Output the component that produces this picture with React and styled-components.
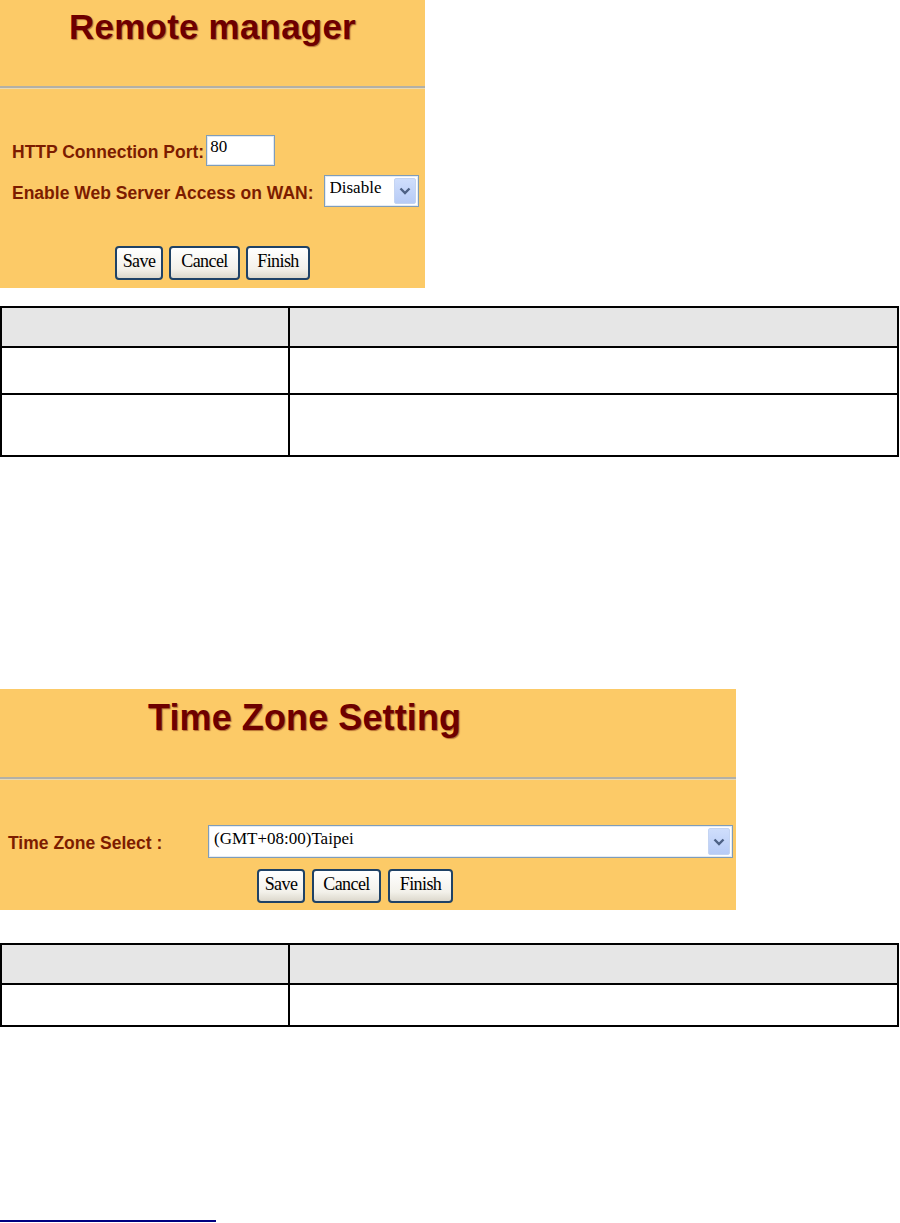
import React from 'react'
import styled, { createGlobalStyle } from 'styled-components'

const GlobalStyle = createGlobalStyle`
    html, body {
        margin: 0;
        padding: 0;
        background: #ffffff;
    }
    body {
        font-family: "Liberation Sans", Arial, sans-serif;
    }
`

const Page = styled.div`
    width: 900px;
    height: 1223px;
    display: flex;
    flex-direction: column;
    align-items: flex-start;
    overflow: hidden;
`

const Panel = styled.div`
    width: ${props => props.width}px;
    height: ${props => props.height}px;
    background-color: #fcca67;
    display: flex;
    flex-direction: column;
    flex-shrink: 0;
    margin-top: ${props => props.top || 0}px;
`

const PanelHead = styled.div`
    height: ${props => props.height}px;
    display: flex;
    justify-content: ${props => props.align || 'center'};
    padding-left: ${props => props.indent || 0}px;
    box-sizing: border-box;
`

const Title = styled.h1`
    margin: ${props => props.top}px 0 0;
    font-family: "Liberation Sans", Arial, sans-serif;
    font-size: ${props => props.size}px;
    line-height: 38px;
    font-weight: bold;
    letter-spacing: ${props => props.spacing}px;
    color: #6e0000;
    text-shadow: 1px 1px 1px rgba(110, 20, 0, 0.5);
`

const Divider = styled.div`
    height: 2px;
    background-color: #b3b0a6;
    border-bottom: 1px solid #e9d9b4;
`

const PanelBody = styled.div`
    flex: 1;
    display: flex;
    flex-direction: column;
    padding: ${props => props.top}px 0 0 ${props => props.left || 0}px;
`

const FieldRow = styled.div`
    display: flex;
    align-items: center;
    gap: ${props => props.gap || 2}px;
    margin-bottom: ${props => props.after || 0}px;
`

const Label = styled.label`
    font-family: "Liberation Sans", Arial, sans-serif;
    font-size: 17.5px;
    font-weight: bold;
    color: #7c1c00;
    width: ${props => props.width ? props.width + 'px' : 'auto'};
    padding-top: 4px;
    flex-shrink: 0;
`

const TextInput = styled.input`
    width: 69px;
    height: 31px;
    box-sizing: border-box;
    border: 1px solid #7f9db9;
    box-shadow: inset 0 0 0 1px #dfe8f3;
    background: #ffffff;
    font-family: "Liberation Serif", "Times New Roman", serif;
    font-size: 17px;
    padding: 0 3px 8px;
    color: #000;
    outline: none;
`

const SelectWrap = styled.div`
    position: relative;
    width: ${props => props.width}px;
    height: ${props => props.height}px;
    box-sizing: border-box;
    border: 1px solid #7f9db9;
    box-shadow: inset 0 0 0 1px #e4ebf4;
    background: #ffffff;
`

const Select = styled.select`
    appearance: none;
    -webkit-appearance: none;
    width: 100%;
    height: 100%;
    border: none;
    background: transparent;
    font-family: "Liberation Serif", "Times New Roman", serif;
    font-size: 17px;
    padding: 0 0 ${props => props.lift || 0}px 5px;
    color: #000;
    outline: none;
`

const DropButton = styled.span`
    position: absolute;
    top: 2px;
    right: 2px;
    bottom: 2px;
    width: 22px;
    border-radius: 2px;
    background: linear-gradient(180deg, #cfdefc 0%, #b7cbf6 100%);
    border: 1px solid #c4d4f2;
    box-sizing: border-box;
    display: flex;
    align-items: center;
    justify-content: center;
    pointer-events: none;
`

const ButtonRow = styled.div`
    display: flex;
    gap: ${props => props.gap || 6}px;
    justify-content: center;
    padding-right: ${props => props.shift || 0}px;
    margin-bottom: ${props => props.after || 0}px;
`

const Button = styled.button`
    width: ${props => props.width}px;
    height: 34px;
    box-sizing: border-box;
    border: 2px solid #1f4266;
    border-radius: 4px;
    background: linear-gradient(180deg, #ffffff 0%, #f3f1ea 70%, #dcd8cc 100%);
    font-family: "Liberation Serif", "Times New Roman", serif;
    font-size: 18px;
    letter-spacing: -0.6px;
    color: #000;
    padding: 0 0 4px;
    cursor: pointer;
`

const Table = styled.table`
    width: 899px;
    border-collapse: collapse;
    margin-top: ${props => props.top}px;
    flex-shrink: 0;
    td, th {
        border: 2px solid #000;
        padding: 0;
    }
`

const HeadCell = styled.th`
    background-color: #e6e6e6;
    height: 38px;
    width: ${props => props.width ? props.width + 'px' : 'auto'};
`

const Cell = styled.td`
    height: ${props => props.height}px;
`

const FootRule = styled.div`
    width: 216px;
    height: 0;
    border-top: 2px solid #000080;
    margin-top: auto;
    margin-bottom: 1px;
`

const Chevron = () => (
    <svg width="12" height="8" viewBox="0 0 12 8">
        <path d="M1.5 1.5 L6 6 L10.5 1.5" fill="none" stroke="#4d6185" strokeWidth="2.4" />
    </svg>
)

const Buttons = ({ gap, shift, after, widths }) => (
    <ButtonRow gap={gap} shift={shift} after={after}>
        <Button width={widths[0]}>Save</Button>
        <Button width={widths[1]}>Cancel</Button>
        <Button width={widths[2]}>Finish</Button>
    </ButtonRow>
)

const InfoTable = ({ top, rows }) => (
    <Table top={top}>
        <thead>
            <tr>
                <HeadCell width={286}></HeadCell>
                <HeadCell></HeadCell>
            </tr>
        </thead>
        <tbody>
            {rows.map((h, i) => (
                <tr key={i}>
                    <Cell height={h}></Cell>
                    <Cell height={h}></Cell>
                </tr>
            ))}
        </tbody>
    </Table>
)

const App = () => {
    return (
        <Page>
            <GlobalStyle />
            <Panel width={425} height={288}>
                <PanelHead height={86}>
                    <Title top={8} size={35} spacing={0.2}>Remote manager</Title>
                </PanelHead>
                <Divider />
                <PanelBody top={46} left={12}>
                    <FieldRow after={9}>
                        <Label htmlFor="port">HTTP Connection Port:</Label>
                        <TextInput id="port" defaultValue="80" />
                    </FieldRow>
                    <FieldRow after={39} gap={10}>
                        <Label htmlFor="wan">Enable Web Server Access on WAN:</Label>
                        <SelectWrap width={95} height={32}>
                            <Select id="wan" lift={8} defaultValue="Disable">
                                <option>Disable</option>
                                <option>Enable</option>
                            </Select>
                            <DropButton><Chevron /></DropButton>
                        </SelectWrap>
                    </FieldRow>
                </PanelBody>
                <Buttons gap={6} after={8} widths={[48, 71, 64]} />
            </Panel>

            <InfoTable top={18} rows={[45, 60]} />

            <Panel width={736} height={221} top={232}>
                <PanelHead height={88} align="flex-start" indent={148}>
                    <Title top={10} size={36} spacing={0.1}>Time Zone Setting</Title>
                </PanelHead>
                <Divider />
                <PanelBody top={45} left={8}>
                    <FieldRow after={11}>
                        <Label htmlFor="tz" width={198}>Time Zone Select :</Label>
                        <SelectWrap width={525} height={33}>
                            <Select id="tz" lift={6} defaultValue="(GMT+08:00)Taipei">
                                <option>(GMT+08:00)Taipei</option>
                            </Select>
                            <DropButton><Chevron /></DropButton>
                        </SelectWrap>
                    </FieldRow>
                    <Buttons gap={7} shift={34} widths={[48, 69, 65]} />
                </PanelBody>
            </Panel>

            <InfoTable top={33} rows={[40]} />

            <FootRule />
        </Page>
    )
}

export default App
